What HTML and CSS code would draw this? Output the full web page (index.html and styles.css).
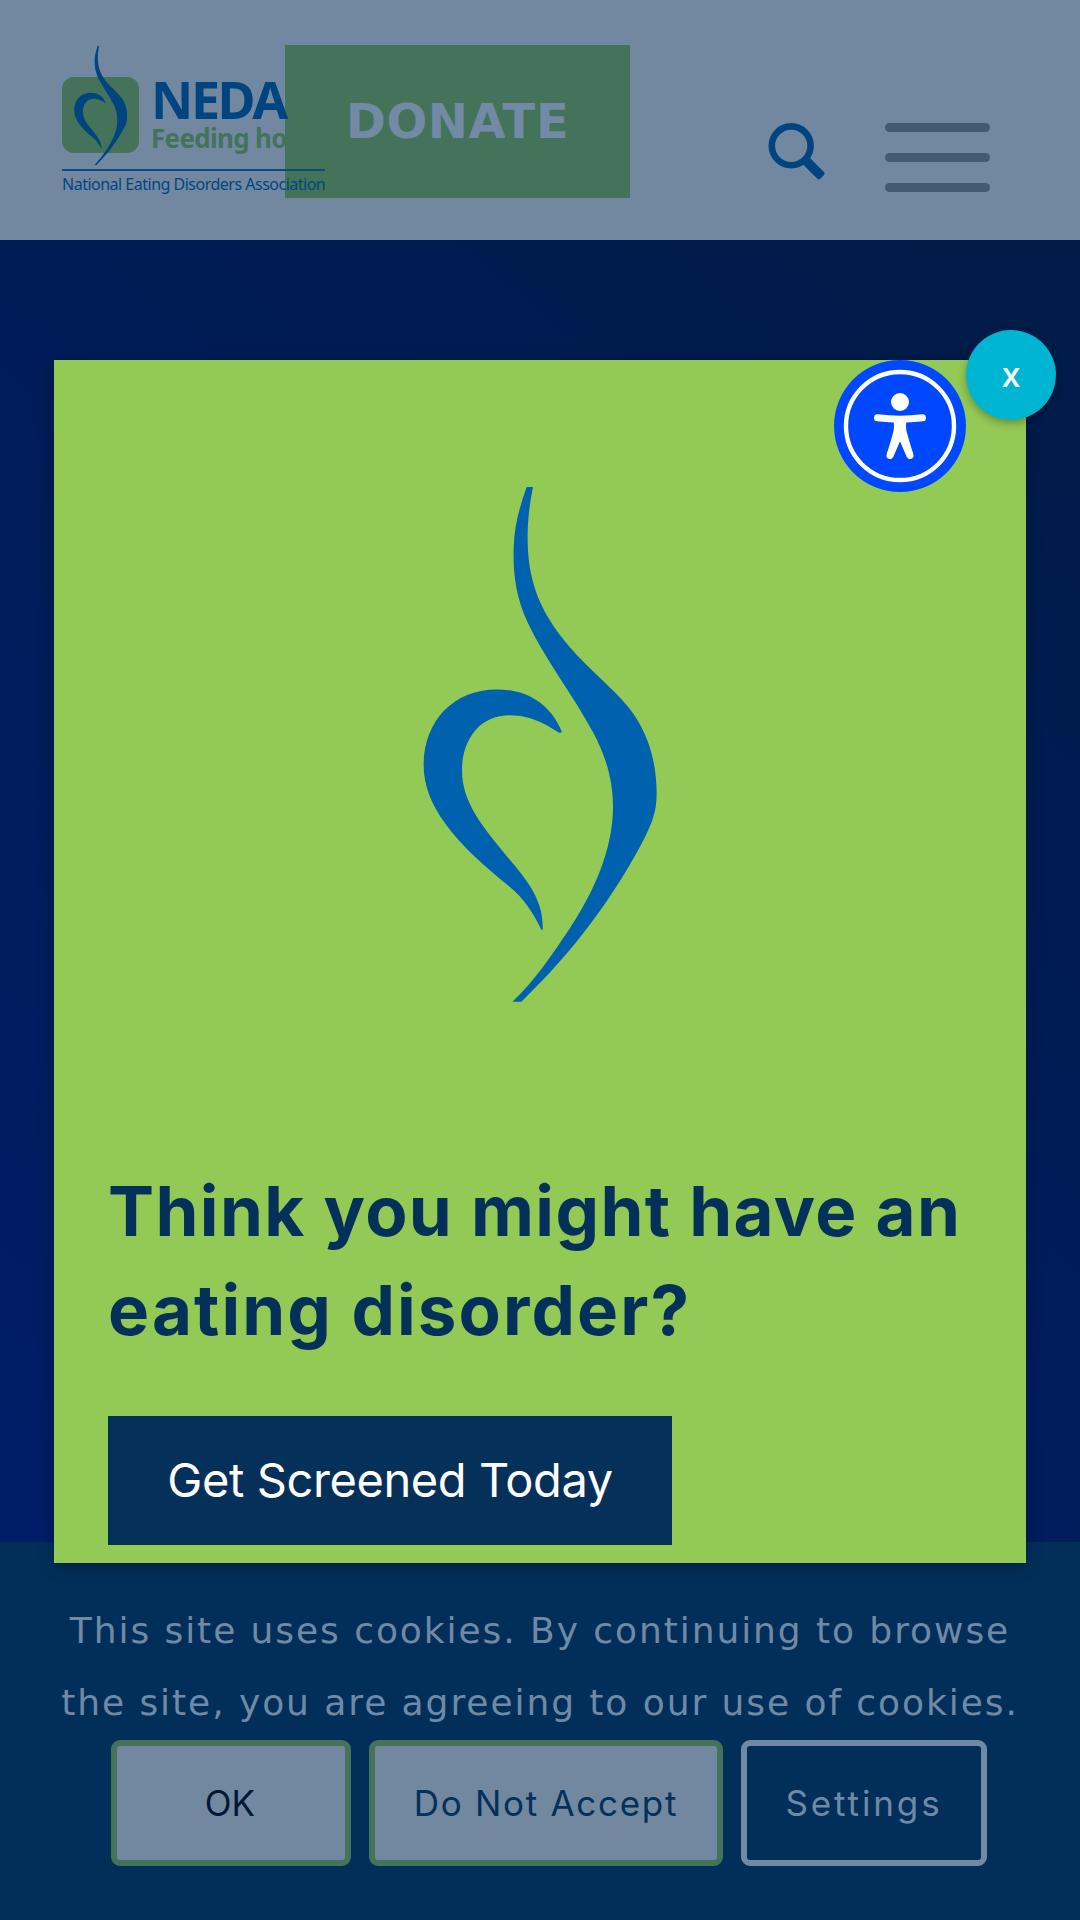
FILE: index.html
```html
<!DOCTYPE html>
<html lang="en">
<head>
<meta charset="utf-8">
<title>National Eating Disorders Association</title>
<link rel="stylesheet" href="styles.css">
</head>
<body>
<svg width="0" height="0" class="defs" aria-hidden="true">
  <symbol id="swirl" viewBox="70 75 702 1417" preserveAspectRatio="none">
    <path d="M381 75H400C383 150 380 220 388 280C400 370 440 440 510 515C570 578 640 628 690 685C745 750 771 830 771 920C771 965 757 1001 735 1040C645 1200 520 1355 365 1491H338C400 1440 455 1366 510 1290C575 1200 640 1080 640 955C640 880 618 815 580 750C520 647 433 545 385 450C347 375 340 310 342 240C344 180 360 130 381 75Z"/>
    <path d="M486 747C450 670 380 632 292 632C160 632 72 720 72 840C72 950 160 1050 330 1175C370 1205 400 1245 425 1293H429C432 1230 402 1180 350 1122C260 1022 187 950 187 855C187 770 240 703 330 703C400 703 450 735 478 751Q486 753 486 747Z"/>
  </symbol>
</svg>
<div class="page">
  <header class="header">
    <a class="logo">
      <span class="logo-top">
        <span class="logo-mark"><svg class="logo-swirl"><use href="#swirl"/></svg></span>
        <span class="logo-words">
          <span class="logo-name">NEDA</span>
          <span class="logo-motto">Feeding hope</span>
        </span>
      </span>
      <span class="logo-tagline">National Eating Disorders Association</span>
    </a>
    <a class="donate">DONATE</a>
    <svg class="search" viewBox="0 0 60 60"><circle cx="24.2" cy="23.8" r="19.4" fill="none" stroke="currentColor" stroke-width="6.6"/><path d="M43 36L57 50Q58.500 51.500 57 53L53.300 56.700Q51.800 58.200 50.300 56.700L36 42.500Z" fill="currentColor"/></svg>
    <div class="menu"><span></span><span></span><span></span></div>
  </header>
  <main class="hero"></main>
  <section class="cookies">
    <p class="cookie-text">This site uses cookies. By continuing to browse<br>the site, you are agreeing to our use of cookies.</p>
    <div class="cookie-actions">
      <button class="btn ok">OK</button>
      <button class="btn decline">Do Not Accept</button>
      <button class="btn settings">Settings</button>
    </div>
  </section>
</div>
<div class="modal">
  <svg class="modal-swirl"><use href="#swirl"/></svg>
  <h2 class="modal-title"><span class="l1">Think you might have an</span><br><span class="l2">eating disorder?</span></h2>
  <a class="screen-btn">Get Screened Today</a>
  <svg class="a11y" viewBox="0 0 132 132"><circle cx="66" cy="66" r="66" fill="#0048ff"/><circle cx="66" cy="66" r="54" fill="none" stroke="#fff" stroke-width="4.4"/><circle cx="66" cy="42" r="9" fill="#fff"/><path d="M43.5 57.8Q66 60.5 88.500 57.8M56 95.500L66 72L76 95.500" fill="none" stroke="#fff" stroke-width="7" stroke-linecap="round" stroke-linejoin="round"/><path d="M59 59H73Q71 66 73 73Q76 84 79.300 94L73 97L66 81L59 97L52.700 94Q56 84 59 73Q61 66 59 59Z" fill="#fff"/></svg>
  <button class="close">x</button>
</div>
</body>
</html>
```
FILE: styles.css
```css
* { box-sizing: border-box; }
body { margin: 0; width: 1080px; height: 1920px; overflow: hidden; position: relative; font-family: Inter, sans-serif; }
button { font-family: inherit; margin: 0; padding: 0; }
.defs { position: absolute; }
.page { display: flex; flex-direction: column; height: 1920px; }

.header { height: 240px; background: #7288a1; display: flex; align-items: flex-start; padding: 45px 90px 0 62px; }
.logo { position: relative; z-index: 1; width: 263px; margin-right: -39.7px; display: flex; flex-direction: column; color: #004580; font-family: "Noto Sans", sans-serif; white-space: nowrap; }
.logo-top { display: flex; gap: 12px; height: 125.5px; padding-top: 31.5px; border-bottom: 2px solid #0d4a80; }
.logo-mark { position: relative; flex: none; width: 77px; height: 76.5px; border-radius: 12px; background: #44735a; }
.logo-swirl { position: absolute; left: 11.6px; top: -31px; width: 53.4px; height: 119px; fill: #004580; }
.logo-words { display: flex; flex-direction: column; width: 174px; }
.logo-name { font-weight: 700; font-size: 52px; line-height: 44px; letter-spacing: -2.4px; }
.logo-motto { font-weight: 700; font-size: 26px; line-height: 35px; letter-spacing: -.7px; color: #44735a; }
.logo-tagline { font-size: 16px; line-height: 27px; letter-spacing: -.5px; }
.donate { width: 344.7px; height: 152.5px; background: #44735a; color: #728aa5; font: 700 48px/152.5px "DejaVu Sans", sans-serif; letter-spacing: .6px; text-align: center; }
.search { width: 60px; height: 60px; margin: 77px 0 0 137px; color: #004580; }
.menu { width: 105px; margin: 78px 0 0 58px; display: flex; flex-direction: column; gap: 21px; }
.menu span { height: 9px; border-radius: 4.5px; background: #445a74; }

.hero { height: 1302px; background: linear-gradient(40deg, #001e68 0%, #001c58 55%, #001b46 100%); }

.cookies { flex: 1; background: #022f5a; padding-top: 53px; }
.cookie-text { margin: 0 0 1px; font: 36px/72px "DejaVu Sans", sans-serif; letter-spacing: 1.93px; text-align: center; color: #7089a6; white-space: nowrap; }
.cookie-actions { display: flex; gap: 18px; padding-left: 111px; }
.btn { height: 126px; border: 6px solid #44735a; border-radius: 9px; background: #7288a1; color: #043059; font-size: 35px; letter-spacing: 1.7px; white-space: nowrap; }
.ok { width: 240px; color: #001736; letter-spacing: 0; padding-right: 2px; }
.decline { width: 354px; }
.settings { width: 246px; background: none; border-color: #7089a6; color: #7089a6; letter-spacing: 2.9px; }

.modal { position: absolute; left: 54px; top: 360px; width: 972px; height: 1203px; background: #93c955; box-shadow: 0 3px 15px rgba(0, 0, 0, .3); padding: 127px 54px 0; display: flex; flex-direction: column; align-items: flex-start; }
.modal-swirl { width: 234px; height: 515px; fill: #0061af; align-self: center; }
.modal-title { margin: 160px 0 0; font-size: 69px; line-height: 99px; font-weight: 700; color: #043059; white-space: nowrap; }
.l1 { letter-spacing: 1.4px; }
.l2 { letter-spacing: 2.1px; }
.screen-btn { margin-top: 56px; width: 564px; height: 129px; background: #043059; color: #fff; font-size: 47px; line-height: 127px; letter-spacing: -.4px; text-align: center; white-space: nowrap; }
.a11y { position: absolute; left: 780px; top: 0; width: 132px; height: 132px; }
.close { position: absolute; left: 912px; top: -30px; width: 90px; height: 90px; border: 0; border-radius: 50%; background: #00b5d1; color: #fff; font-size: 35px; font-weight: 500; padding-bottom: 2px; box-shadow: 0 3px 8px rgba(0, 0, 0, .3); }
```
